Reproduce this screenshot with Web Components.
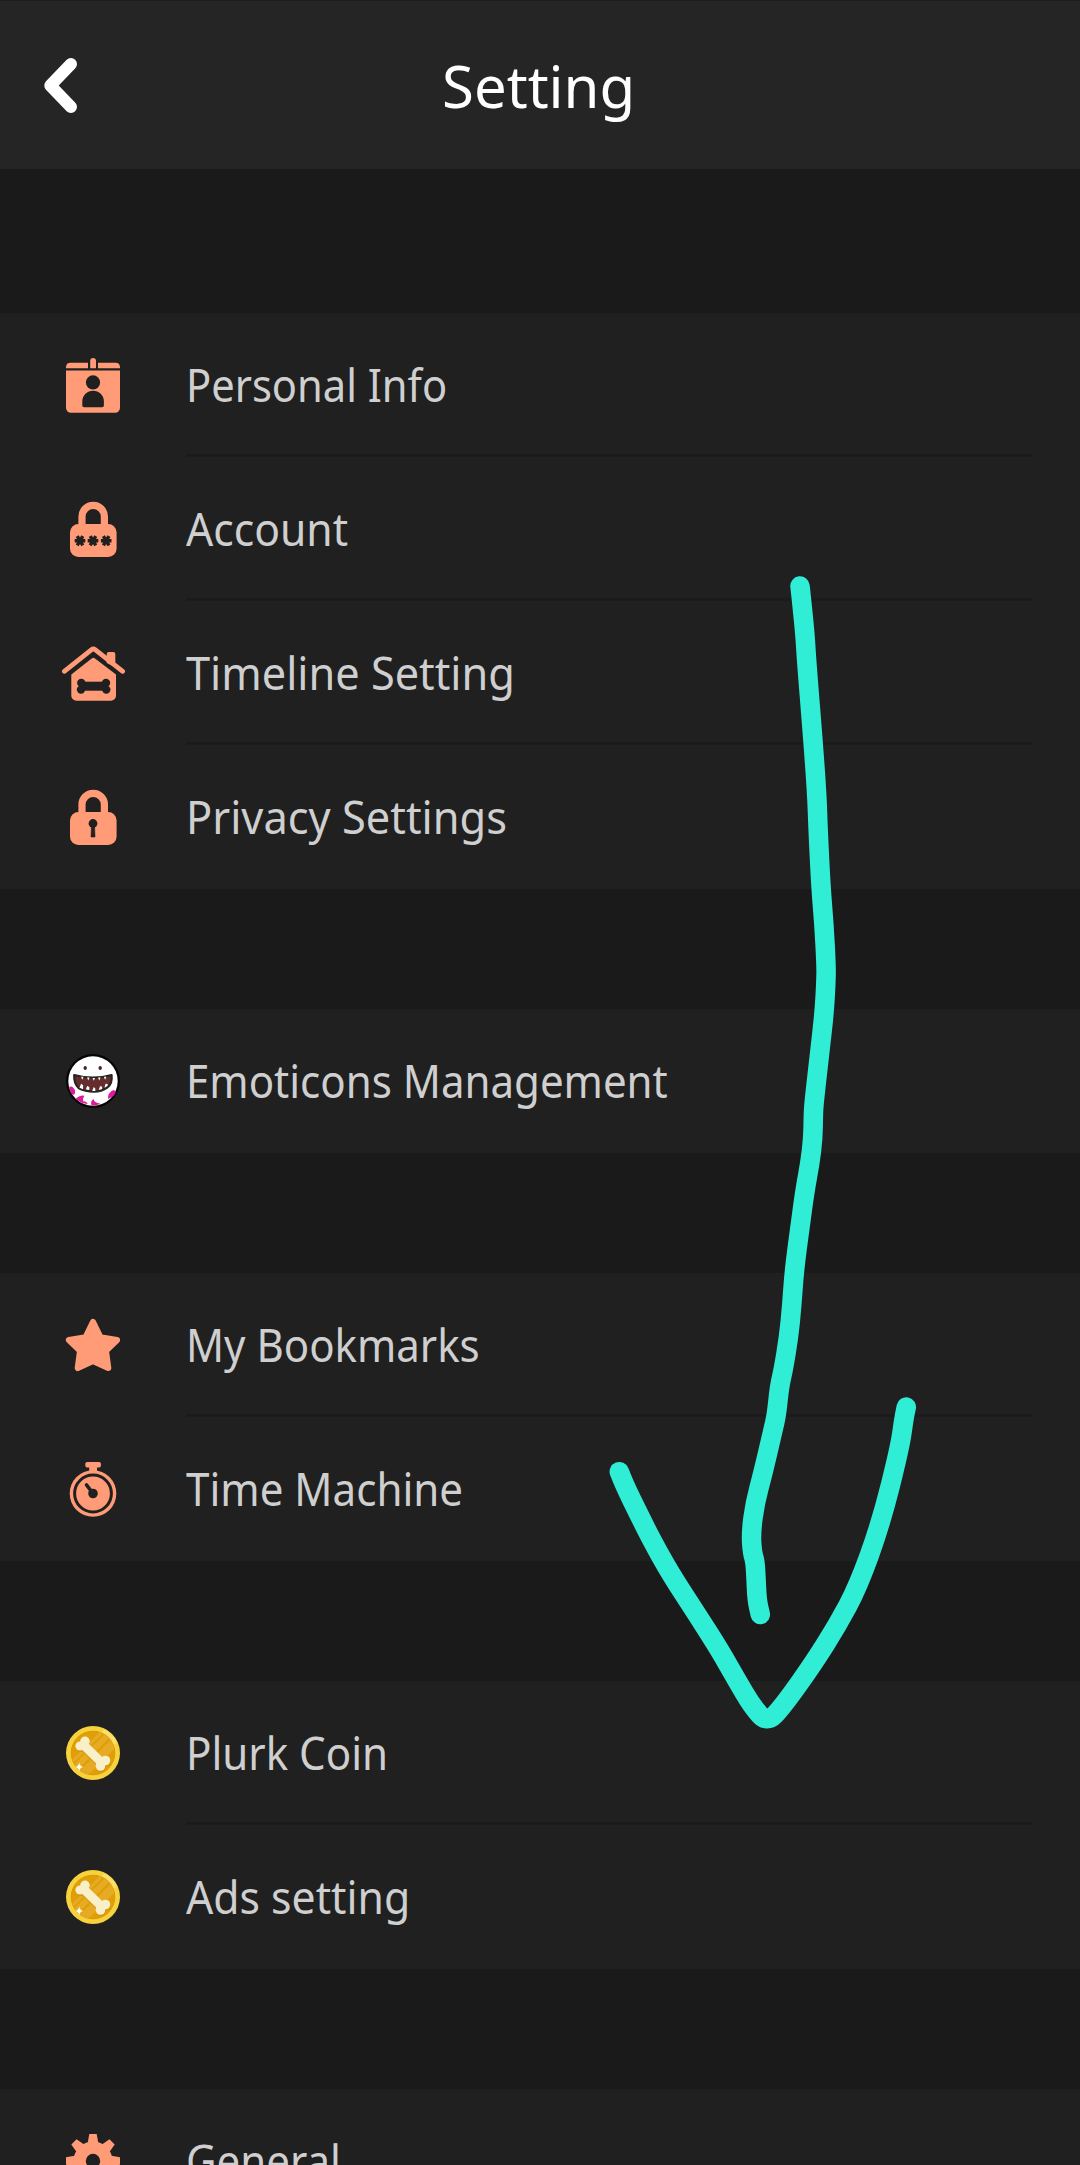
<!DOCTYPE html>
<html lang="en">
<head>
<meta charset="utf-8">
<title>Setting</title>
<style>
  html, body {
    margin: 0;
    padding: 0;
    background: #1a1a1a;
  }
  body {
    height: 2165px;
    overflow: hidden;
    font-family: "Noto Sans", "Open Sans", sans-serif;
  }
</style>
</head>
<body>
<settings-page>
  <app-header slot="header"><fit-text width="193">Setting</fit-text></app-header>
  <settings-group>
    <settings-item icon="card"><fit-text width="261">Personal Info</fit-text></settings-item>
    <settings-item icon="password"><fit-text width="162">Account</fit-text></settings-item>
    <settings-item icon="house"><fit-text width="329">Timeline Setting</fit-text></settings-item>
    <settings-item icon="lock"><fit-text width="321">Privacy Settings</fit-text></settings-item>
  </settings-group>
  <settings-group>
    <settings-item icon="emoticon"><fit-text width="482">Emoticons Management</fit-text></settings-item>
  </settings-group>
  <settings-group>
    <settings-item icon="star"><fit-text width="294">My Bookmarks</fit-text></settings-item>
    <settings-item icon="watch"><fit-text width="277">Time Machine</fit-text></settings-item>
  </settings-group>
  <settings-group>
    <settings-item icon="coin"><fit-text width="202">Plurk Coin</fit-text></settings-item>
    <settings-item icon="coin"><fit-text width="224">Ads setting</fit-text></settings-item>
  </settings-group>
  <settings-group>
    <settings-item icon="gear"><fit-text width="155">General</fit-text></settings-item>
  </settings-group>
  <scribble-arrow slot="overlay"></scribble-arrow>
</settings-page>

<script>
const BG = "#202020";

const shackle = `<path d="M25 34V23.5a11.2 11.2 0 0 1 22.4 0V34" fill="none" stroke="currentColor" stroke-width="7.2"/>
  <rect x="13" y="31" width="46.6" height="33" rx="8.5"/>`;

const asterisk = (x, y) => `<path d="M${x - 5.3} ${y}H${x + 5.3}M${x - 2.8} ${y - 4.6}L${x + 2.8} ${y + 4.6}M${x + 2.8} ${y - 4.6}L${x - 2.8} ${y + 4.6}" stroke="${BG}" stroke-width="3.4"/>`;

const gear = () => {
  let teeth = "";
  for (let i = 0; i < 8; i++) {
    teeth += `<path d="M30.5 19L32.3 9H39.7L41.5 19Z" transform="rotate(${i * 45} 36 36)"/>`;
  }
  return `${teeth}<circle cx="36" cy="36" r="19.5"/><circle cx="36" cy="36" r="7.2" fill="${BG}"/>`;
};

const ICONS = {
  card: `
    <path d="M9 19.3V18a4.5 4.5 0 0 1 4.5-4.3H31V19.3Z"/>
    <path d="M41 19.3V13.7H58.5A4.5 4.5 0 0 1 63 18V19.3Z"/>
    <path d="M33.2 19.3V12a2.9 2.9 0 0 1 5.8 0V19.3Z"/>
    <path d="M9 21.5H63V59a5 5 0 0 1-5 4.8H14a5 5 0 0 1-5-4.8Z"/>
    <circle cx="36" cy="33.4" r="7.1" fill="${BG}"/>
    <path fill="${BG}" d="M25.3 56.5V52.5a10.8 10.8 0 0 1 21.6 0V56.5a1.8 1.8 0 0 1-1.8 1.8H27.1a1.8 1.8 0 0 1-1.8-1.8Z"/>`,
  password: shackle + asterisk(23, 47.7) + asterisk(36, 47.7) + asterisk(49.2, 47.7),
  house: `
    <path d="M49.7 26V17a2 2 0 0 1 2-2h4.600a2 2 0 0 1 2 2V30Z"/>
    <path d="M7.300 34.300L34.600 12.700a2.800 2.800 0 0 1 3.500 0L65.700 34.300" fill="none" stroke="currentColor" stroke-width="4.800" stroke-linecap="round"/>
    <path d="M35 21.300a2.200 2.200 0 0 1 2.700 0L59 37.600V59a5 5 0 0 1-5 4.700H19.300a5 5 0 0 1-5-4.700V37.600Z"/>
    <g fill="${BG}"><rect x="24" y="44.700" width="25.500" height="9"/>
    <circle cx="24.300" cy="45.900" r="4.200"/><circle cx="24" cy="52.600" r="4.200"/>
    <circle cx="49" cy="45.900" r="4.200"/><circle cx="49.300" cy="52.600" r="4.200"/></g>`,
  lock: shackle + `<circle cx="36" cy="42.5" r="4.4" fill="${BG}"/><path d="M34.5 44h3L38 56h-4Z" fill="${BG}" stroke="${BG}" stroke-width=".6"/>`,
  emoticon: `
    <circle cx="36" cy="36" r="27" fill="#050505"/>
    <circle cx="36" cy="36" r="24.7" fill="#fff"/>
    <g fill="#e0189b">
      <path d="M12.200 42Q15.500 40 18 45.500Q18.600 49.500 15.800 50Q12.800 47 12.200 42Z"/>
      <path d="M18.800 53.600Q23.800 49.500 27.300 50.800Q25.300 54 26.400 56.400Q29.500 56 30.800 59Q24 59 18.800 53.600Z"/>
      <path d="M34.500 60.500Q33 56 36.600 54Q36.800 57.800 43.500 58.800Q39.500 60.900 34.500 60.500Z"/>
      <path d="M51 54Q50.500 47.700 56.500 45Q60.800 46 56.400 51Z"/>
    </g>
    <ellipse cx="28.200" cy="23" rx="1.700" ry="2" fill="#4b2424"/>
    <ellipse cx="43.200" cy="23" rx="1.700" ry="2" fill="#4b2424"/>
    <path d="M17.200 30Q36 35.300 54.600 30Q55.500 38.500 50.500 42.300Q44.500 46.600 37 46.700Q28 46.500 21.800 43.200Q16.800 38.500 17.200 30Z" fill="#652e2d" stroke="#292525" stroke-width="2.200" stroke-linejoin="round"/>
    <g fill="#fff">
      <path d="M24 31.800h2.600l-1.300 3ZM30 32.600h2.600l-1.300 2.900ZM35.500 32.900h2.600l-1.300 2.900ZM41 32.600h2.600l-1.300 2.900ZM46.800 31.800h2.600l-1.300 3Z"/>
      <path d="M22.500 42.800l1.600-4 2 1.500v4ZM28.900 44.600l1.200-3.700 2.200 1.200v3ZM35.200 46l1.500-4 1.600 1.400v2.600ZM41.800 44.900l1.300-4 2 .8v2.400ZM47.500 42.700l1-4 2.200.4v1.600Z"/>
    </g>`,
  star: `<path d="M36 13L43.300 28.200L60 31L48.900 41.800L51.200 59L36 51.900L20.800 59L23.100 41.800L12 31L28.700 28.200Z" stroke="currentColor" stroke-width="6.2" stroke-linejoin="round"/>`,
  watch: `
    <rect x="28.3" y="9" width="15.6" height="5.6" rx="1.8"/>
    <rect x="32.2" y="13" width="7.8" height="6"/>
    <circle cx="36" cy="40.5" r="23.3"/>
    <circle cx="36" cy="40.5" r="18.4" fill="none" stroke="${BG}" stroke-width="3"/>
    <circle cx="36" cy="40.5" r="4.8" fill="${BG}"/>
    <path d="M36 40.5L29.5 31.9" stroke="${BG}" stroke-width="3.5" stroke-linecap="round"/>`,
  coin: `
    <clipPath id="face"><circle cx="36" cy="36" r="22"/></clipPath>
    <circle cx="36" cy="36" r="27" fill="#f7d23c"/>
    <path d="M47 12A26 26 0 0 1 60 26L54 28A20 20 0 0 0 44 18Z" fill="#fae06a"/>
    <circle cx="36" cy="36" r="21.8" fill="#e19f06" stroke="#d69a12" stroke-width="1"/>
    <g clip-path="url(#face)" stroke="#e7aa24">
      <path d="M8 52L54 6" stroke-width="3"/>
      <path d="M10 59L60 9" stroke-width="6"/>
      <path d="M20 63L66 17" stroke-width="9"/>
    </g>
    <g fill="#d4920d" transform="translate(.3 1.2)">
      <path d="M25.5 27L46 47" stroke="#d4920d" stroke-width="9"/>
      <circle cx="23" cy="29" r="4.8"/><circle cx="28" cy="24.3" r="4.8"/>
      <circle cx="48.5" cy="43.5" r="4.8"/><circle cx="43.5" cy="49" r="4.8"/>
    </g>
    <g fill="#f9efc8">
      <path d="M25.5 27L46 47" stroke="#f9efc8" stroke-width="8.8"/>
      <circle cx="23" cy="29" r="4.6"/><circle cx="28" cy="24.3" r="4.8"/>
      <circle cx="48.5" cy="43.5" r="4.8"/><circle cx="43.5" cy="49" r="4.8"/>
    </g>
    <path d="M22.200 45.500Q22.700 49.300 26.500 50Q22.700 50.700 22.200 54.500Q21.700 50.700 18 50Q21.700 49.300 22.200 45.500Z" fill="#fffbe8"/>`,
  gear: gear()
};

// Squeezes its text to a given width, so the labels keep their narrow proportions
class FitText extends HTMLElement {
  constructor() {
    super();
    this.attachShadow({mode: "open"});
  }
  connectedCallback() {
    this.shadowRoot.innerHTML = `
    <style>
      :host {
        display: block;
        width: ${this.getAttribute("width")}px;
        white-space: nowrap;
      }
      span {
        display: inline-block;
        transform-origin: 0 50%;
      }
    </style>
    <span><slot></slot></span>
    `;
    const span = this.shadowRoot.querySelector("span");
    const ratio = Number(this.getAttribute("width")) / span.offsetWidth;
    span.style.transform = `scaleX(${ratio})`;
  }
}

class AppHeader extends HTMLElement {
  constructor() {
    super();
    this.attachShadow({mode: "open"});
  }
  connectedCallback() {
    this.shadowRoot.innerHTML = `
    <style>
      :host {
        display: grid;
        grid-template-columns: 120px 1fr 120px;
        align-items: center;
        box-sizing: border-box;
        height: 169px;
        border-top: 1px solid #1e1e1e;
        background: #252525;
        color: #fff;
        font-size: 59px;
        line-height: 80px;
      }
      svg {
        display: block;
        margin-left: 36px;
      }
      .title {
        display: flex;
        justify-content: center;
        padding-right: 3px;
      }
    </style>
    <svg width="50" height="70" viewBox="0 0 50 70">
      <path d="M35 14L14.300 35.500L35 57" fill="none" stroke="#fff" stroke-width="12" stroke-linecap="round" stroke-linejoin="round"/>
    </svg>
    <div class="title"><slot></slot></div>
    `;
  }
}

class SettingsItem extends HTMLElement {
  constructor() {
    super();
    this.attachShadow({mode: "open"});
  }
  connectedCallback() {
    this.shadowRoot.innerHTML = `
    <style>
      :host {
        display: flex;
        height: 144px;
        padding: 0 48px 0 57px;
        color: #cfcfcf;
        font-size: 45px;
        line-height: 60px;
      }
      svg {
        flex: none;
        width: 72px;
        height: 72px;
        margin: 36px 57px 0 0;
        color: #ff9b76;
      }
      .label {
        flex: 1;
        box-sizing: border-box;
        padding-top: 42px;
        border-bottom: 3px solid #1b1b1b;
      }
      :host(:last-child) .label {
        border-bottom: 0;
      }
    </style>
    <svg viewBox="0 0 72 72" fill="currentColor">${ICONS[this.getAttribute("icon")]}</svg>
    <div class="label"><slot></slot></div>
    `;
  }
}

class SettingsGroup extends HTMLElement {
  constructor() {
    super();
    this.attachShadow({mode: "open"});
  }
  connectedCallback() {
    this.shadowRoot.innerHTML = `
    <style>
      :host {
        display: block;
        background: ${BG};
      }
    </style>
    <slot></slot>
    `;
  }
}

class ScribbleArrow extends HTMLElement {
  constructor() {
    super();
    this.attachShadow({mode: "open"});
  }
  static get strokes() {
    return [
      [[800, 586], [804.7, 629], [806.5, 660], [813.3, 744], [817, 797], [818, 828], [821, 889], [824, 924], [826.2, 966], [826, 981], [824.3, 1012], [820, 1050], [814, 1103], [813.3, 1115], [813, 1138], [810, 1163], [805, 1190], [800, 1227], [794.3, 1270], [791.7, 1307], [788.7, 1337], [783.3, 1370], [779.5, 1386], [776.5, 1415], [773, 1430], [763, 1473], [755, 1503], [751, 1533], [752.4, 1553], [755, 1561], [756, 1577], [757, 1600], [760.3, 1614.5]],
      [[619.3, 1471.7], [624, 1484], [640, 1516.7], [651.7, 1540], [670, 1573], [696.7, 1614], [720, 1650.7], [736.7, 1680], [752, 1706], [767, 1723], [782.5, 1706.7], [813, 1664], [837.5, 1625], [858, 1586.7], [881, 1523], [900, 1446.7], [904, 1418], [906.3, 1407]]
    ];
  }
  // Curve through the midpoints of the sampled points
  toPath(points) {
    let d = `M${points[0]}`;
    for (let i = 1; i < points.length - 1; i++) {
      const [x, y] = points[i];
      const [nx, ny] = points[i + 1];
      d += `Q${x} ${y} ${(x + nx) / 2} ${(y + ny) / 2}`;
    }
    return d + `L${points[points.length - 1]}`;
  }
  connectedCallback() {
    this.shadowRoot.innerHTML = `
    <style>
      :host {
        position: absolute;
        top: 0;
        left: 0;
        pointer-events: none;
      }
      svg {
        display: block;
      }
    </style>
    <svg width="1080" height="2165" viewBox="0 0 1080 2165" fill="none" stroke="#30edd5" stroke-width="19.500" stroke-linecap="round" stroke-linejoin="round">
      ${ScribbleArrow.strokes.map((points) => `<path d="${this.toPath(points)}"/>`).join("")}
    </svg>
    `;
  }
}

class SettingsPage extends HTMLElement {
  constructor() {
    super();
    this.attachShadow({mode: "open"});
  }
  connectedCallback() {
    this.shadowRoot.innerHTML = `
    <style>
      :host {
        display: block;
        position: relative;
        width: 1080px;
        height: 2165px;
        overflow: hidden;
      }
      main {
        display: flex;
        flex-direction: column;
        gap: 120px;
        padding-top: 144px;
      }
    </style>
    <slot name="header"></slot>
    <main><slot></slot></main>
    <slot name="overlay"></slot>
    `;
  }
}

window.customElements.define("settings-page", SettingsPage);
window.customElements.define("app-header", AppHeader);
window.customElements.define("settings-group", SettingsGroup);
window.customElements.define("settings-item", SettingsItem);
window.customElements.define("scribble-arrow", ScribbleArrow);
window.customElements.define("fit-text", FitText);
</script>
</body>
</html>
